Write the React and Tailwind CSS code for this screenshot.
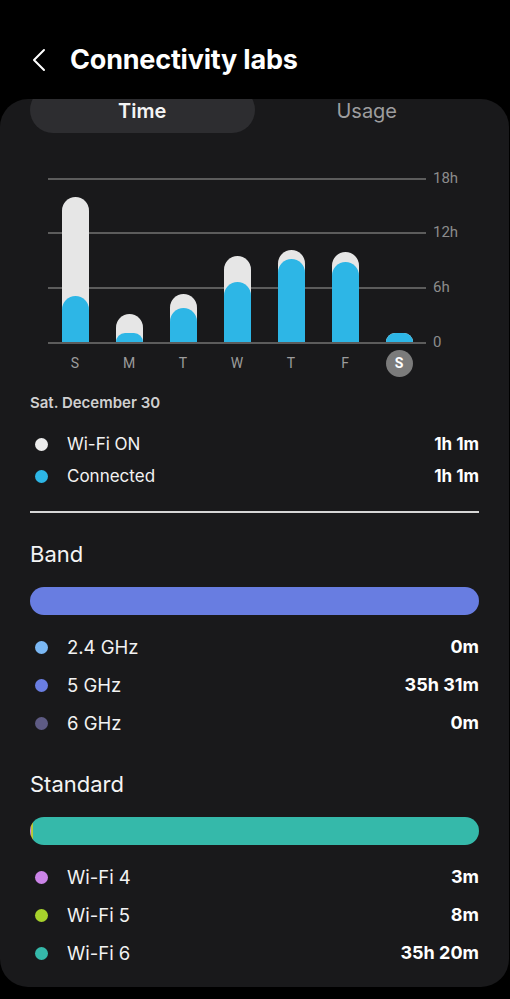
import React from 'react';

const days = [
  { label: 'S', on: 145, conn: 46 },
  { label: 'M', on: 28, conn: 9 },
  { label: 'T', on: 48, conn: 34 },
  { label: 'W', on: 86, conn: 60 },
  { label: 'T', on: 92, conn: 83 },
  { label: 'F', on: 90, conn: 80 },
  { label: 'S', on: 0, conn: 9, selected: true },
];

const gridLines = [
  { top: 'top-0', label: '18h' },
  { top: 'top-[54px]', label: '12h' },
  { top: 'top-[109px]', label: '6h' },
  { top: 'top-[164px]', label: '0' },
];

const bands = [
  { name: '2.4 GHz', value: '0m', dot: 'bg-[#7bb8f4]' },
  { name: '5 GHz', value: '35h 31m', dot: 'bg-[#6a7ee2]' },
  { name: '6 GHz', value: '0m', dot: 'bg-[#5e5b84]' },
];

const standards = [
  { name: 'Wi-Fi 4', value: '3m', dot: 'bg-[#cb84e8]' },
  { name: 'Wi-Fi 5', value: '8m', dot: 'bg-[#a7d22c]' },
  { name: 'Wi-Fi 6', value: '35h 20m', dot: 'bg-[#35b9aa]' },
];

const LegendRow = ({ dot, name, value, size }) => (
  <div className={`flex items-center ${size === 'sm' ? 'h-[32px] pt-[2px]' : 'h-[38px] pt-[1px]'}`}>
    <span className={`w-[13px] h-[13px] rounded-full ml-[5px] ${dot}`} />
    <span className={`ml-[19px] text-[#f2f2f2] leading-none ${size === 'sm' ? 'text-[17px]' : 'text-[18.5px]'}`}>{name}</span>
    <span className={`ml-auto font-bold text-white leading-none ${size === 'sm' ? 'text-[17px]' : 'text-[18px]'}`}>{value}</span>
  </div>
);

const App = () => {
  return (
    <div className="w-[510px] min-h-[999px] bg-black text-white font-['Inter',sans-serif]">
      {/* header */}
      <div className="h-[99px] pt-[40px]">
        <div className="flex items-center h-[40px]">
          <svg width="14" height="24" viewBox="0 0 14 24" className="ml-[32px]">
            <polyline points="12,2 2,12 12,22" fill="none" stroke="#fff" strokeWidth="2" strokeLinecap="round" strokeLinejoin="round" />
          </svg>
          <h1 className="ml-[24px] text-[27px] font-bold tracking-[-0.2px]">Connectivity labs</h1>
        </div>
      </div>

      <div className="w-[509px] bg-[#19191b] rounded-[28px] overflow-hidden pb-[15px]">
        {/* tabs */}
        <div className="grid grid-cols-2 px-[30px]">
          <div className="h-[46px] -mt-[12px] rounded-[23px] bg-[#2d2d30] flex items-center justify-center pt-[1px]">
            <span className="text-[20px] font-semibold text-[#f4f4f4]">Time</span>
          </div>
          <div className="h-[46px] -mt-[12px] flex items-center justify-center pt-[1px]">
            <span className="text-[20px] text-[#9d9d9f]">Usage</span>
          </div>
        </div>

        {/* chart */}
        <div className="mt-[45px] font-['Roboto',sans-serif]">
          <div className="relative w-[378px] h-[164px] ml-[48px]">
            {gridLines.map((g) => (
              <div key={g.label} className={`absolute left-0 ${g.top} w-[378px] h-[1.5px] bg-[#5c5c5c]`}>
                <span className="absolute left-[385px] -top-[10px] text-[15px] leading-[20px] text-[#8c8c8c]">{g.label}</span>
              </div>
            ))}
            <div className="relative grid grid-cols-7 h-full items-end">
              {days.map((d, i) => (
                <div key={i} className="flex justify-center items-end h-full">
                  <div
                    className="w-[27px] rounded-t-[14px] bg-[#e6e6e6] flex flex-col justify-end"
                    style={{ height: Math.max(d.on, d.conn) }}
                  >
                    <div className="w-[27px] rounded-t-[14px] bg-[#2db6e6]" style={{ height: d.conn }} />
                  </div>
                </div>
              ))}
            </div>
          </div>
          <div className="grid grid-cols-7 w-[378px] ml-[48px] mt-[7px]">
            {days.map((d, i) => (
              <div key={i} className="h-[28px] flex items-center justify-center">
                {d.selected ? (
                  <span className="w-[27px] h-[27px] rounded-full bg-[#7b7b7b] flex items-center justify-center text-[14px] font-bold text-white">{d.label}</span>
                ) : (
                  <span className="text-[14px] text-[#9c9c9c]">{d.label}</span>
                )}
              </div>
            ))}
          </div>
        </div>

        <div className="px-[30px]">
          <p className="mt-[16px] text-[15px] leading-[20px] font-semibold text-[#d0d0d0]">Sat. December 30</p>

          <div className="mt-[14px]">
            <LegendRow dot="bg-[#ececec]" name="Wi-Fi ON" value="1h 1m" size="sm" />
            <LegendRow dot="bg-[#2db6e6]" name="Connected" value="1h 1m" size="sm" />
          </div>

          <div className="mt-[20px] h-[1.5px] bg-[#d6d6d6]" />

          {/* band */}
          <h2 className="mt-[27px] text-[22px] leading-[28px] text-[#f4f4f4]">Band</h2>
          <div className="mt-[19px] h-[28px] rounded-full bg-[#687de1]" />
          <div className="mt-[13px]">
            {bands.map((b) => (
              <LegendRow key={b.name} {...b} />
            ))}
          </div>

          {/* standard */}
          <h2 className="mt-[28px] text-[22px] leading-[28px] text-[#f4f4f4]">Standard</h2>
          <div className="mt-[19px] h-[28px] rounded-full overflow-hidden flex">
            <div className="w-[1px] bg-[#cb84e8]" />
            <div className="w-[2px] bg-[#b9c63a]" />
            <div className="flex-1 bg-[#35b9aa]" />
          </div>
          <div className="mt-[13px]">
            {standards.map((s) => (
              <LegendRow key={s.name} {...s} />
            ))}
          </div>
        </div>
      </div>
    </div>
  );
};

export default App;
